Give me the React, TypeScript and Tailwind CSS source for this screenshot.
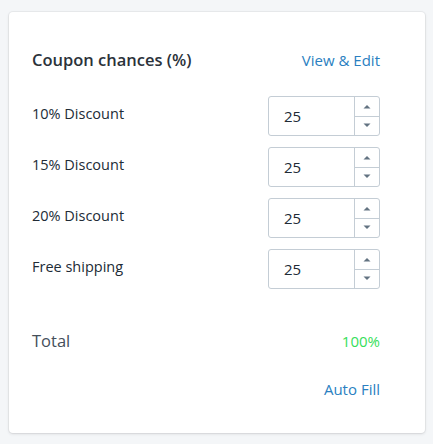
const rows = ["10% Discount", "15% Discount", "20% Discount", "Free shipping"];

function Stepper({ value }: { value: number }) {
  return (
    <div className="flex h-[40px] w-[112px] overflow-hidden rounded-[3px] border border-[#c4cdd5] bg-white">
      <div className="flex flex-1 items-center pl-[15px] text-[15px] text-[#212b36]">{value}</div>
      <div className="flex w-[25px] flex-col border-l border-[#c4cdd5]">
        <div className="flex flex-1 items-center justify-center border-b border-[#c4cdd5]">
          <svg width="8" height="5" viewBox="0 0 8 5">
            <path d="M0.5 4.5 L4 1 L7.5 4.5 Z" fill="#637381" />
          </svg>
        </div>
        <div className="flex flex-1 items-center justify-center">
          <svg width="8" height="5" viewBox="0 0 8 5">
            <path d="M0.5 0.5 L4 4 L7.5 0.5 Z" fill="#637381" />
          </svg>
        </div>
      </div>
    </div>
  );
}

export default function App() {
  return (
    <div
      className="min-h-[444px] bg-[#f4f6f8] pl-[9px] pt-[12px]"
      style={{ fontFamily: '"Open Sans", "Noto Sans", sans-serif' }}
    >
      <div className="flex h-[421px] w-[416px] flex-col rounded-[4px] bg-white pl-[23px] pr-[45px] pt-[36px] shadow-[0_0_0_1px_rgba(63,63,68,0.05),0_1px_3px_0_rgba(63,63,68,0.15)]">
        <div className="flex h-[24px] items-center justify-between">
          <h2 className="text-[16.5px] font-semibold text-[#2b323a]">Coupon chances (%)</h2>
          <a className="text-[15px] text-[#2a7fc1]">View &amp; Edit</a>
        </div>

        <div className="mt-[24px] flex flex-col gap-[11px]">
          {rows.map((label) => (
            <div key={label} className="flex items-start justify-between">
              <span className="mt-[8px] text-[14.5px] leading-[20px] text-[#212b36]">{label}</span>
              <Stepper value={25} />
            </div>
          ))}
        </div>

        <div className="mt-[38px] flex h-[28px] items-center justify-between">
          <span className="text-[16.5px] text-[#454f5b]">Total</span>
          <span className="text-[15px] text-[#36de5a]">100%</span>
        </div>

        <div className="mt-[24px] flex h-[20px] items-center justify-end">
          <a className="text-[15px] text-[#2a7fc1]">Auto Fill</a>
        </div>
      </div>
    </div>
  );
}
